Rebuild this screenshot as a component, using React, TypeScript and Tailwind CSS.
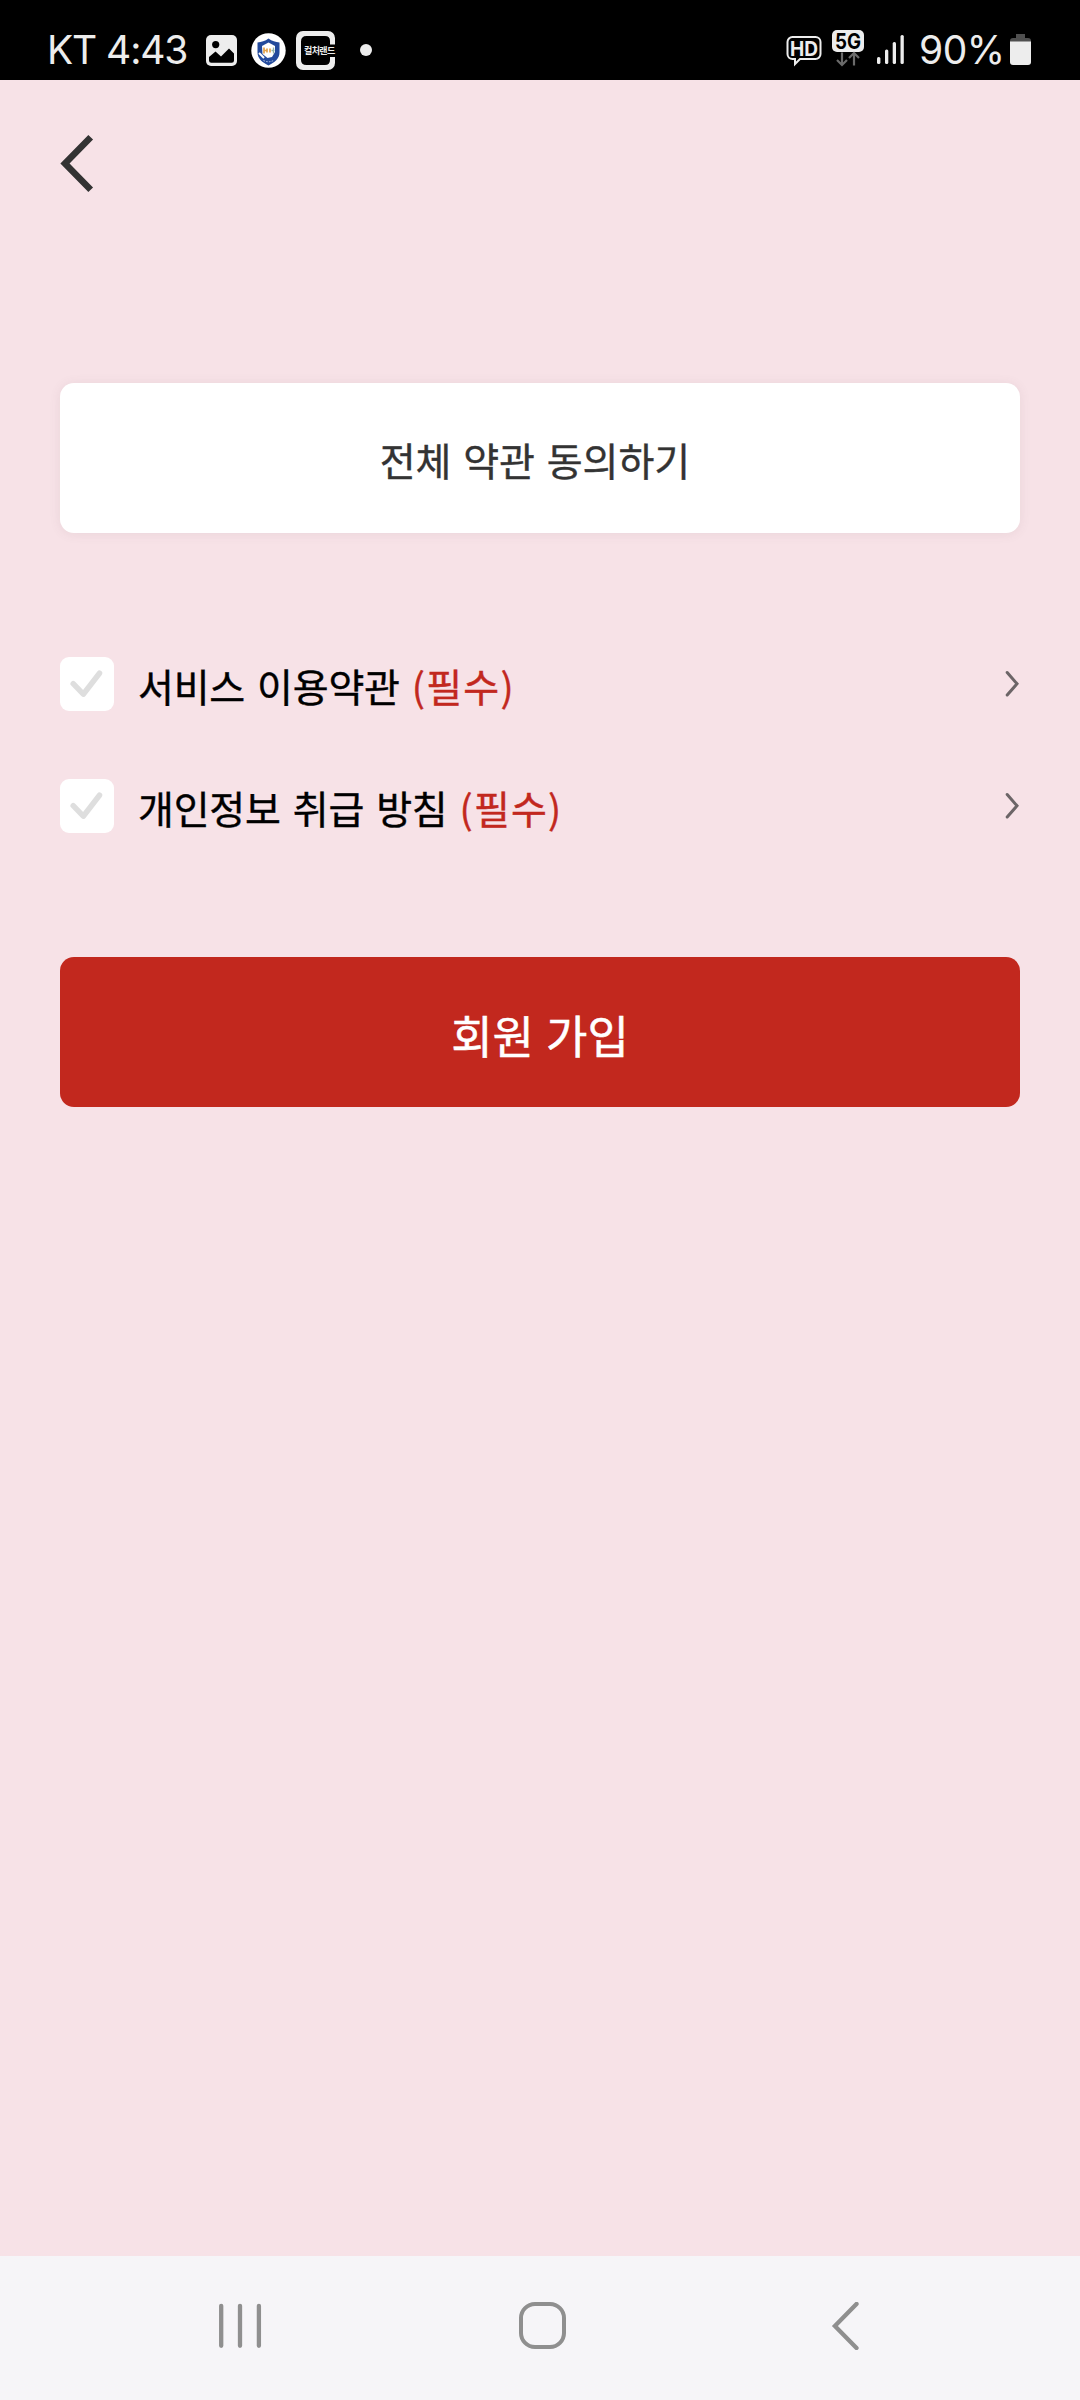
import React from 'react';

const terms = [
    { id: 'service', title: '서비스 이용약관' },
    { id: 'privacy', title: '개인정보 취급 방침' },
];

function StatusBar() {
    return (
        <div className="h-20 bg-black text-[#ededed] flex items-start justify-between pl-[47px] pr-[49px] font-['Inter',sans-serif]">
            <div className="flex items-start">
                <p className="w-[159px] mt-[26px] text-[39px] leading-[48px] font-normal tracking-[-1.1px] whitespace-nowrap">KT 4:43</p>

                <svg className="mt-[35px]" width="31" height="31" viewBox="0 0 31 31">
                    <rect width="31" height="31" rx="5" fill="#ededed" />
                    <circle cx="9.7" cy="9.6" r="3.6" fill="#000" />
                    <path d="M3 22L9.500 16.500l5.500 5L23 13.500l5 5v7a2.300 2.300 0 0 1-2.300 2.300H5.300A2.300 2.300 0 0 1 3 25.500z" fill="#000" />
                </svg>

                <svg className="ml-[14px] mt-[33px]" width="35" height="35" viewBox="0 0 35 35">
                    <circle cx="17.500" cy="17.500" r="17.200" fill="#fff" />
                    <path d="M17.500 5.500c3.500 2.600 7 3.500 11 4v10c0 6-5 10-11 13-6-3-11-7-11-13v-10c4-.500 7.500-1.400 11-4z" fill="#234a9c" />
                    <path d="M11 13l6.500-3.500L24 13v6l-3 5-4.500 1-5-4z" fill="#fff" />
                    <path d="M8 20l5 5" stroke="#fff" strokeWidth="2" />
                    <path d="M13 14.500v6M16 15.500v4M19 15.500v4M13 17.500h2.500" stroke="#e3a24a" strokeWidth="1.700" />
                    <path d="M20.500 17.500h3M22.500 14.500v6" stroke="#8fb4a8" strokeWidth="1.300" />
                    <path d="M12.500 27.500q5 2.500 10 0" stroke="#b9c6e4" strokeWidth="1" strokeDasharray="1.500 1.300" fill="none" />
                </svg>

                <div className="relative ml-[10px] mt-[31px] h-[39px] w-[39px]">
                    <svg width="39" height="39" viewBox="0 0 39 39">
                        <path d="M39 13.500V7a7 7 0 0 0-7-7H7a7 7 0 0 0-7 7v25a7 7 0 0 0 7 7h25a7 7 0 0 0 7-7v-6h-5v3q0 5-5 5H10.500Q5 34 5 29V10.500Q5 5 10.500 5H29q5 0 5 5v3.500z" fill="#ededed" />
                    </svg>
                    <span className="absolute left-2 top-[13px] text-[9px] leading-[13px] font-bold tracking-[-0.6px] whitespace-nowrap font-['Noto_Sans_CJK_KR',sans-serif]">컬처랜드</span>
                </div>

                <div className="ml-[25px] mt-11 h-3 w-3 rounded-full bg-[#ededed]" />
            </div>

            <div className="flex items-start">
                <svg className="mt-[35px] overflow-visible" width="36" height="31" viewBox="0 0 36 31">
                    <path d="M6.500 2h23a5 5 0 0 1 5 5v12a5 5 0 0 1-5 5H14l-5 5v-5H6.500a5 5 0 0 1-5-5V7a5 5 0 0 1 5-5z" fill="none" stroke="#ededed" strokeWidth="2" />
                    <text x="18" y="20.500" textAnchor="middle" textLength="28" lengthAdjust="spacingAndGlyphs" fontSize="20.500" fontWeight="700" fill="#ededed">HD</text>
                </svg>

                <svg className="ml-[10px] mt-[30px] overflow-visible" width="32" height="37" viewBox="0 0 32 37">
                    <rect width="32" height="22" rx="5" fill="#ededed" />
                    <text x="16" y="18.500" textAnchor="middle" textLength="26" lengthAdjust="spacingAndGlyphs" fontSize="21.500" fontWeight="700" fill="#000">5G</text>
                    <path d="M10 22.500v12M5 30l5 5 5-5M22 35.500v-12M17 28l5-5 5 5" fill="none" stroke="#6a6a6a" strokeWidth="2.200" />
                </svg>

                <svg className="ml-[13px] mt-[35px]" width="28" height="30" viewBox="0 0 28 30" fill="#ededed">
                    <rect x="0" y="22" width="3.400" height="7" rx="1.500" />
                    <rect x="8" y="14.500" width="3.300" height="14.500" rx="1.500" />
                    <rect x="15.700" y="7" width="3.300" height="22" rx="1.500" />
                    <rect x="23.500" y="0" width="3.300" height="29" rx="1.500" />
                </svg>

                <p className="ml-[14px] mt-[26px] w-[91px] text-[39px] leading-[48px] font-normal tracking-[-0.5px] whitespace-nowrap">90%</p>

                <svg className="mt-[34px]" width="21" height="31" viewBox="0 0 21 31">
                    <path d="M6 0h9v4h3q3 0 3 3v1H0V7q0-3 3-3h3z" fill="#4f4f4f" />
                    <path d="M0 7.500h21V28a3 3 0 0 1-3 3H3a3 3 0 0 1-3-3z" fill="#ededed" />
                </svg>
            </div>
        </div>
    );
}

function TermRow({ title }: { title: string }) {
    return (
        <div className="flex h-[54px] items-center justify-between">
            <div className="flex items-center">
                <div className="h-[54px] w-[54px] rounded-[9px] bg-white">
                    <svg width="54" height="54" viewBox="0 0 54 54" fill="none" stroke="#dedede" strokeWidth="5.500" strokeLinecap="round" strokeLinejoin="round">
                        <path d="M13.200 26.700L23.300 37.200L39.500 16.200" />
                    </svg>
                </div>
                <p className="ml-[24px] mt-[1px] text-[39px] leading-[54px] [-webkit-text-stroke:0.4px] tracking-[-0.2px] [word-spacing:3.500px] whitespace-nowrap text-black">
                    {title} <span className="tracking-[1.2px] text-[#c2281e]">(필수)</span>
                </p>
            </div>
            <svg className="mr-[1px]" width="14" height="28" viewBox="0 0 14 28" fill="none" stroke="#6c6567" strokeWidth="3" strokeLinecap="round">
                <path d="M2.200 2.500L12 13.800L2.200 25" />
            </svg>
        </div>
    );
}

function NavBar() {
    return (
        <div className="flex h-36 items-start bg-[#f6f5f8] pl-[219px] pt-[46px]">
            <svg className="mt-[1px]" width="43" height="46" viewBox="0 0 43 46" fill="none" stroke="#8f8f8f" strokeWidth="4.300" strokeLinecap="round">
                <path d="M2.200 2.800v40M21 2.800v40M39.900 2.800v40" />
            </svg>
            <div className="ml-[257px] h-[47px] w-[47px] rounded-[16px] border-4 border-[#8f8f8f]" />
            <svg className="ml-[265px]" width="30" height="48" viewBox="0 0 30 48" fill="none" stroke="#8f8f8f" strokeWidth="4.300" strokeLinecap="round">
                <path d="M25.500 1.900L3.900 24L25.500 46" />
            </svg>
        </div>
    );
}

export default function App() {
    return (
        <div className="flex h-[2400px] w-[1080px] flex-col overflow-hidden bg-[#f7e2e7] font-['Noto_Sans_CJK_KR',sans-serif]">
            <StatusBar />

            <main className="flex-1 px-[60px] pt-[54px]">
                <button className="block">
                    <svg width="36" height="60" viewBox="0 0 36 60" fill="none" stroke="#333" strokeWidth="6.600">
                        <path d="M30.700 3.300L5 29.500L30.700 55.700" />
                    </svg>
                </button>

                <button className="mt-[189px] flex h-[150px] w-full items-center justify-center rounded-[14px] bg-white pr-[10px] pt-[2px] text-[39px] [-webkit-text-stroke:0.4px] tracking-[0px] [word-spacing:3px] text-[#333] shadow-[0_1px_12px_rgba(100,80,85,0.09)]">
                    전체 약관 동의하기
                </button>

                <div className="mt-[124px] flex flex-col gap-[68px]">
                    {terms.map((term) => (
                        <TermRow key={term.id} title={term.title} />
                    ))}
                </div>

                <button className="mt-[124px] flex h-[150px] w-full items-center justify-center rounded-[14px] bg-[#c2281e] pt-[6px] text-[45px] [-webkit-text-stroke:0.5px] tracking-[0px] [word-spacing:2px] text-white">
                    회원 가입
                </button>
            </main>

            <NavBar />
        </div>
    );
}
